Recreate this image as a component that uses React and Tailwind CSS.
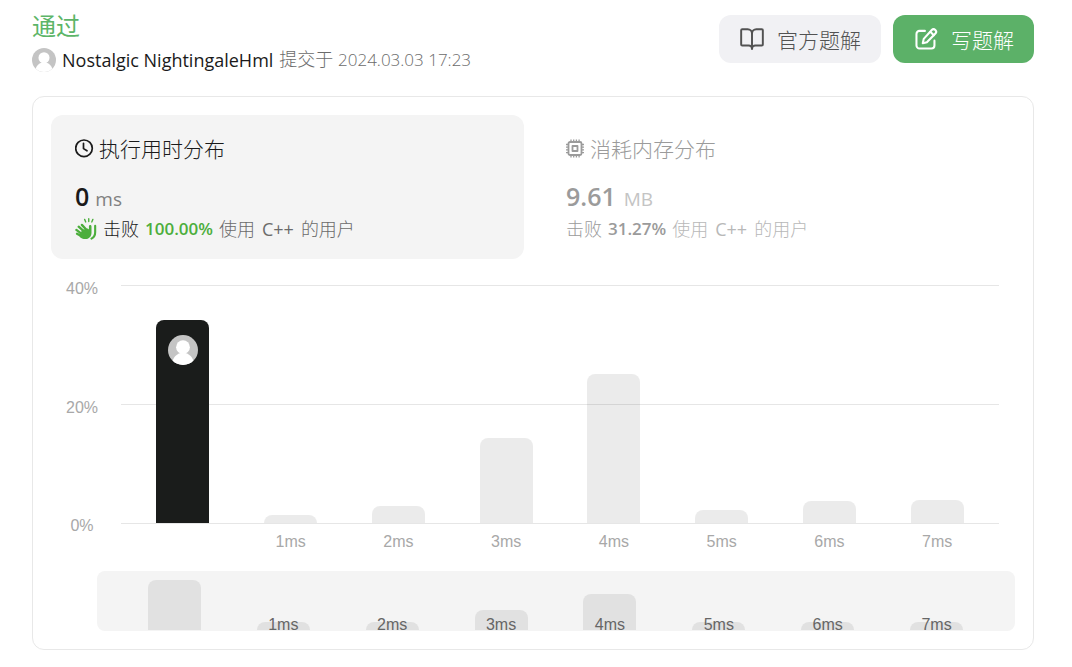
import { BookOpen } from "lucide-react";

const bars = [
  { label: "", height: 203, mini: 50 },
  { label: "1ms", height: 8, mini: 8 },
  { label: "2ms", height: 17, mini: 8 },
  { label: "3ms", height: 85, mini: 20 },
  { label: "4ms", height: 149, mini: 36 },
  { label: "5ms", height: 13, mini: 8 },
  { label: "6ms", height: 22, mini: 8 },
  { label: "7ms", height: 23, mini: 8 },
];

function Avatar({ className }) {
  return (
    <svg viewBox="0 0 30 30" className={className} aria-hidden="true">
      <defs>
        <clipPath id="avatar-clip">
          <circle cx="15" cy="15" r="15" />
        </clipPath>
      </defs>
      <g clipPath="url(#avatar-clip)">
        <rect width="30" height="30" fill="#c4c4c4" />
        <circle cx="15" cy="12.200" r="6.900" fill="#fff" />
        <path d="M3.500 30C4.500 22.500 9 17.800 15 17.800S25.500 22.500 26.500 30z" fill="#fff" />
      </g>
    </svg>
  );
}

function PenSquare({ className }) {
  return (
    <svg viewBox="0 0 24 24" fill="none" stroke="currentColor" strokeWidth="1.900" strokeLinecap="round" strokeLinejoin="round" className={className} aria-hidden="true">
      <path d="M11 4.500H6a2.800 2.800 0 0 0-2.800 2.800V18A2.800 2.800 0 0 0 6 20.800h11a2.800 2.800 0 0 0 2.800-2.800v-4.500" />
      <path d="M17.300 3.700a2.300 2.300 0 0 1 3.400 3.200L12.800 15 9 15.900l.9-4z" />
      <path d="M16 5.300 19.200 8.500" />
    </svg>
  );
}

function Clock({ className }) {
  return (
    <svg viewBox="0 0 20 20" fill="none" stroke="currentColor" strokeWidth="1.700" strokeLinecap="round" strokeLinejoin="round" className={className} aria-hidden="true">
      <circle cx="9" cy="9.300" r="8.300" />
      <path d="M8.500 4.300v5.300l3.500 2.200" />
    </svg>
  );
}

function Chip({ className }) {
  return (
    <svg viewBox="0 0 20 20" fill="none" stroke="currentColor" strokeWidth="1.800" strokeLinejoin="round" className={className} aria-hidden="true">
      <rect x="2.500" y="3" width="13" height="13" rx="1.500" />
      <rect x="6.500" y="7" width="5" height="5" />
      <path d="M5 .5v2M7.700.5v2M10.400.5v2M13.100.5v2M5 16.500v2M7.700 16.500v2M10.400 16.500v2M13.100 16.500v2M0 5.500h2M0 8.200h2M0 10.900h2M0 13.600h2M16 5.500h2M16 8.200h2M16 10.900h2M16 13.600h2" strokeWidth="1.300" />
    </svg>
  );
}

function Clap({ className }) {
  return (
    <svg viewBox="0 0 24 24" fill="none" stroke="#4cae3c" strokeLinecap="round" className={className} aria-hidden="true">
      <path d="M4 9.500l8 7M1.500 13l8 6M2.200 17.200l6 3.300M7.500 7.500l7 7.500" strokeWidth="2.500" />
      <path d="M7.500 13l6.500-1.500 1.200 1V9c.2-1.700 2.600-1.700 2.800.3V16c0 4-2.800 7-6.700 7-2.600 0-4.800-1-6.300-2.500z" fill="#4cae3c" stroke="none" />
      <path d="M22 8.500v7c0 3.500-1.700 5.800-4 7" strokeWidth="2.300" />
      <path d="M10.500 1.500l1.200 2.800M15 .8v3M19.500 1.500l-1.200 2.800" strokeWidth="1.500" />
    </svg>
  );
}

function Users() {
  return (
    <>
      <span>使用</span>
      <span className="font-normal">C++</span>
      <span>的用户</span>
    </>
  );
}

export default function App() {
  return (
    <main className="bg-white pl-8 pr-[38px] pt-[10px] font-['Open_Sans','Noto_Sans_CJK_SC',sans-serif] font-light text-[#1a1a1a]">
      <header className="flex items-start justify-between">
        <div>
          <h1 className="text-[24px] leading-8 font-normal text-[#5cb568]">通过</h1>
          <div className="mt-[3px] flex items-center gap-[6px] leading-7">
            <Avatar className="size-6" />
            <span className="text-[18px] font-medium">Nostalgic NightingaleHml</span>
            <span className="text-[18px] text-[#6b6b6b]">
              提交于 <time className="text-[17px]">2024.03.03 17:23</time>
            </span>
          </div>
        </div>
        <div className="mt-[5px] flex gap-3">
          <button className="flex h-12 items-center gap-3 rounded-xl bg-[#f1f1f4] px-5 text-[21px] text-[#525252]">
            <BookOpen className="size-[26px]" strokeWidth={1.8} />
            <span className="pt-1">官方题解</span>
          </button>
          <button className="flex h-12 items-center gap-3 rounded-xl bg-[#5cb168] px-5 text-[21px] text-white">
            <PenSquare className="size-[26px]" />
            <span className="pt-1">写题解</span>
          </button>
        </div>
      </header>

      <section className="mt-[22px] rounded-xl border border-[#e8e8e8] p-[18px]">
        <div className="grid grid-cols-2 gap-[18px]">
          <button className="rounded-xl bg-[#f4f4f4] px-6 pt-[18px] pb-[17px] text-left">
            <span className="flex items-center gap-1 text-[21px] leading-8">
              <Clock className="size-5" />
              执行用时分布
            </span>
            <span className="mt-[15px] flex items-baseline gap-[6px] text-[19px] leading-8">
              <b className="text-[25px] font-semibold">0</b>
              <span className="font-normal text-[#808080]">ms</span>
            </span>
            <span className="mt-px flex items-center gap-[6px] text-[18px] leading-[26px]">
              <Clap className="size-[22px]" />
              <span>击败</span>
              <b className="text-[17px] font-semibold text-[#4cae3c]">100.00%</b>
              <span className="flex gap-[7px] text-[#6b6b6b]">
                <Users />
              </span>
            </span>
          </button>
          <button className="rounded-xl px-6 pt-[18px] pb-[17px] text-left text-[#9b9b9b]">
            <span className="flex items-center gap-1 text-[21px] leading-8">
              <Chip className="size-5" />
              消耗内存分布
            </span>
            <span className="mt-[15px] flex items-baseline gap-2 text-[19px] leading-8">
              <b className="text-[25px] font-semibold">9.61</b>
              <span className="font-normal text-[#c4c4c4]">MB</span>
            </span>
            <span className="mt-px flex items-center gap-[6px] text-[18px] leading-[26px]">
              <span>击败</span>
              <b className="text-[17px] font-semibold">31.27%</b>
              <span className="flex gap-[7px] text-[#b8b8b8]">
                <Users />
              </span>
            </span>
          </button>
        </div>

        <div className="mt-[18px] flex pr-4 font-['Liberation_Sans',sans-serif] text-[16px] leading-5 font-normal text-[#a8a8a8]">
          <div className="flex h-[259px] w-[70px] flex-col justify-between pt-[2px] pr-2 text-center">
            <span>40%</span>
            <span>20%</span>
            <span>0%</span>
          </div>
          <div className="grid flex-1 pt-2">
            <div className="col-start-1 row-start-1 flex h-[239px] flex-col justify-between">
              <div className="h-px bg-[#e6e6e6]" />
              <div className="h-px bg-[#e6e6e6]" />
              <div className="h-px bg-[#e6e6e6]" />
            </div>
            <div className="col-start-1 row-start-1 grid grid-cols-8 px-2">
              {bars.map((bar, i) => (
                <div key={i} className="flex flex-col items-center">
                  <div className="flex h-[238px] items-end">
                    <div
                      className={i === 0 ? "flex w-[53px] justify-center rounded-t-lg bg-[#1a1c1b] pt-[15px]" : "w-[53px] rounded-t-lg bg-black/8"}
                      style={{ height: bar.height }}
                    >
                      {i === 0 && <Avatar className="size-[30px]" />}
                    </div>
                  </div>
                  <span className="mt-[9px]">{bar.label}</span>
                </div>
              ))}
            </div>
          </div>
        </div>

        <div className="mt-[19px] ml-[46px] grid h-[60px] grid-cols-8 rounded-lg bg-[#f4f4f4] pl-[23px] pr-[24px] font-['Liberation_Sans',sans-serif] text-[16px] leading-3 font-normal text-[#666]">
          {bars.map((bar, i) => (
            <div key={i} className="grid items-end justify-items-center">
              <div className="col-start-1 row-start-1 mb-px w-[53px] rounded-t-lg bg-[#e1e1e1]" style={{ height: bar.mini }} />
              <span className="col-start-1 row-start-1">{bar.label}</span>
            </div>
          ))}
        </div>
      </section>
    </main>
  );
}
